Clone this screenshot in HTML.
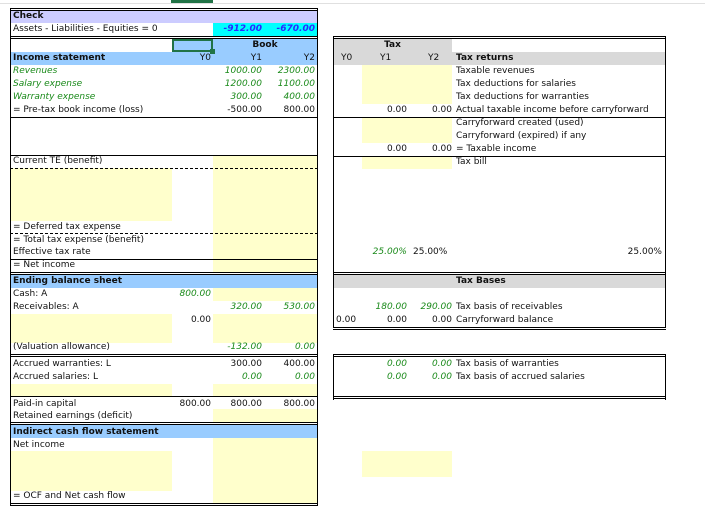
<!DOCTYPE html><html><head><meta charset="utf-8"><style>
*{margin:0;padding:0;box-sizing:border-box}
body{width:705px;height:514px;background:#fff;position:relative;overflow:hidden;font-family:"DejaVu Sans","Liberation Sans",sans-serif;font-size:9px;color:#111}
div{position:absolute}
.r{text-align:right}
.g{color:#1a8a1a;font-style:italic}
.y{background:#ffffcc}
.b{background:#99ccff}
.gr{background:#d9d9d9}
.h{height:1px;background:#000}
.d{height:0;border-top:1px dashed #000}
.dd{height:3px;border-top:1px solid #000;border-bottom:1px solid #000}
.v{width:1px;background:#000}
.t{height:13px;line-height:13px;white-space:nowrap}
.bo{font-weight:bold}
</style></head><body>
<div style="left:171px;top:0;width:42px;height:3px;background:#217346"></div>
<div style="left:0;top:3px;width:705px;height:1px;background:#e0e0e0"></div>
<!-- LEFT fills -->
<div style="left:10px;top:10px;width:307px;height:13px;background:#ccccff"></div>
<div style="left:213px;top:23px;width:104px;height:13px;background:#00ffff"></div>
<div class="b" style="left:213px;top:39px;width:104px;height:13px"></div>
<div class="b" style="left:10px;top:52px;width:307px;height:13px"></div>
<div style="left:172px;top:39px;width:41px;height:13px;background:#99ccff;border:2px solid #217346"></div>
<div style="left:210px;top:49px;width:5px;height:5px;background:#217346"></div>
<div class="y" style="left:213px;top:155px;width:104px;height:117px"></div>
<div class="y" style="left:10px;top:168px;width:162px;height:53px"></div>
<div class="b" style="left:10px;top:275px;width:307px;height:13px"></div>
<div class="y" style="left:213px;top:288px;width:104px;height:13px"></div>
<div class="y" style="left:10px;top:314px;width:162px;height:29px"></div>
<div class="y" style="left:213px;top:314px;width:104px;height:29px"></div>
<div class="y" style="left:10px;top:384px;width:162px;height:12px"></div>
<div class="y" style="left:213px;top:384px;width:104px;height:12px"></div>
<div class="y" style="left:213px;top:409px;width:104px;height:13px"></div>
<div class="b" style="left:10px;top:425px;width:307px;height:13px"></div>
<div class="y" style="left:213px;top:438px;width:104px;height:65px"></div>
<div class="y" style="left:10px;top:451px;width:162px;height:40px"></div>
<!-- LEFT lines -->
<div class="dd" style="left:10px;top:8px;width:308px;height:3px;border-bottom:1px solid #000"></div>
<div class="v" style="left:10px;top:8px;height:498px"></div>
<div class="v" style="left:317px;top:8px;height:498px"></div>
<div class="dd" style="left:10px;top:36px;width:308px"></div>
<div class="h" style="left:10px;top:117px;width:308px"></div>
<div class="h" style="left:10px;top:155px;width:308px"></div>
<div class="d" style="left:10px;top:168px;width:308px"></div>
<div class="d" style="left:10px;top:233px;width:308px"></div>
<div class="h" style="left:10px;top:259px;width:308px"></div>
<div class="dd" style="left:10px;top:272px;width:308px"></div>
<div class="dd" style="left:10px;top:354px;width:308px"></div>
<div class="h" style="left:10px;top:396px;width:308px"></div>
<div class="dd" style="left:10px;top:422px;width:308px"></div>
<div class="dd" style="left:10px;top:503px;width:308px"></div>
<!-- LEFT text -->
<div class="t bo" style="left:13px;top:10px">Check</div>
<div class="t" style="left:13px;top:23px">Assets - Liabilities - Equities = 0</div>
<div class="t r" style="left:213px;top:23px;width:49px;color:#2a2aff;font-weight:bold;font-style:italic">-912.00</div>
<div class="t r" style="left:265px;top:23px;width:50px;color:#2a2aff;font-weight:bold;font-style:italic">-670.00</div>
<div class="t bo" style="left:213px;top:39px;width:104px;text-align:center">Book</div>
<div class="t bo" style="left:13px;top:52px">Income statement</div>
<div class="t r" style="left:172px;top:52px;width:39px">Y0</div>
<div class="t r" style="left:213px;top:52px;width:49px">Y1</div>
<div class="t r" style="left:265px;top:52px;width:50px">Y2</div>
<div class="t g" style="left:13px;top:65px">Revenues</div>
<div class="t g" style="left:13px;top:78px">Salary expense</div>
<div class="t g" style="left:13px;top:91px">Warranty expense</div>
<div class="t" style="left:13px;top:104px">= Pre-tax book income (loss)</div>
<div class="t r g" style="left:213px;top:65px;width:49px">1000.00</div>
<div class="t r g" style="left:265px;top:65px;width:50px">2300.00</div>
<div class="t r g" style="left:213px;top:78px;width:49px">1200.00</div>
<div class="t r g" style="left:265px;top:78px;width:50px">1100.00</div>
<div class="t r g" style="left:213px;top:91px;width:49px">300.00</div>
<div class="t r g" style="left:265px;top:91px;width:50px">400.00</div>
<div class="t r" style="left:213px;top:104px;width:49px">-500.00</div>
<div class="t r" style="left:265px;top:104px;width:50px">800.00</div>
<div class="t" style="left:13px;top:155px">Current TE (benefit)</div>
<div class="t" style="left:13px;top:221px">= Deferred tax expense</div>
<div class="t" style="left:13px;top:234px">= Total tax expense (benefit)</div>
<div class="t" style="left:13px;top:246px">Effective tax rate</div>
<div class="t" style="left:13px;top:259px">= Net income</div>
<div class="t bo" style="left:13px;top:275px">Ending balance sheet</div>
<div class="t" style="left:13px;top:288px">Cash: A</div>
<div class="t r g" style="left:172px;top:288px;width:39px">800.00</div>
<div class="t" style="left:13px;top:301px">Receivables: A</div>
<div class="t r g" style="left:213px;top:301px;width:49px">320.00</div>
<div class="t r g" style="left:265px;top:301px;width:50px">530.00</div>
<div class="t r" style="left:172px;top:314px;width:39px">0.00</div>
<div class="t" style="left:13px;top:341px">(Valuation allowance)</div>
<div class="t r g" style="left:213px;top:341px;width:49px">-132.00</div>
<div class="t r g" style="left:265px;top:341px;width:50px">0.00</div>
<div class="t" style="left:13px;top:358px">Accrued warranties: L</div>
<div class="t r" style="left:213px;top:358px;width:49px">300.00</div>
<div class="t r" style="left:265px;top:358px;width:50px">400.00</div>
<div class="t" style="left:13px;top:371px">Accrued salaries: L</div>
<div class="t r g" style="left:213px;top:371px;width:49px">0.00</div>
<div class="t r g" style="left:265px;top:371px;width:50px">0.00</div>
<div class="t" style="left:13px;top:398px">Paid-in capital</div>
<div class="t r" style="left:172px;top:398px;width:39px">800.00</div>
<div class="t r" style="left:213px;top:398px;width:49px">800.00</div>
<div class="t r" style="left:265px;top:398px;width:50px">800.00</div>
<div class="t" style="left:13px;top:410px">Retained earnings (deficit)</div>
<div class="t bo" style="left:13px;top:426px">Indirect cash flow statement</div>
<div class="t" style="left:13px;top:439px">Net income</div>
<div class="t" style="left:13px;top:490px">= OCF and Net cash flow</div>
<!-- RIGHT -->
<div class="gr" style="left:333px;top:39px;width:119px;height:13px"></div>
<div class="gr" style="left:333px;top:52px;width:332px;height:13px"></div>
<div class="y" style="left:362px;top:65px;width:90px;height:39px"></div>
<div class="y" style="left:362px;top:117px;width:90px;height:26px"></div>
<div class="y" style="left:362px;top:156px;width:90px;height:13px"></div>
<div class="gr" style="left:333px;top:275px;width:332px;height:13px"></div>
<div class="y" style="left:362px;top:451px;width:90px;height:26px"></div>
<div class="dd" style="left:333px;top:36px;width:333px"></div>
<div class="v" style="left:333px;top:36px;height:292px"></div>
<div class="v" style="left:665px;top:36px;height:292px"></div>
<div class="h" style="left:333px;top:117px;width:333px"></div>
<div class="h" style="left:333px;top:156px;width:333px"></div>
<div class="dd" style="left:333px;top:272px;width:333px"></div>
<div class="dd" style="left:333px;top:327px;width:333px"></div>
<div class="dd" style="left:333px;top:354px;width:333px"></div>
<div class="v" style="left:333px;top:354px;height:46px"></div>
<div class="v" style="left:665px;top:354px;height:46px"></div>
<div class="dd" style="left:333px;top:396px;width:333px"></div>
<div class="t bo" style="left:333px;top:39px;width:119px;text-align:center">Tax</div>
<div class="t" style="left:341px;top:52px">Y0</div>
<div class="t" style="left:380px;top:52px">Y1</div>
<div class="t" style="left:428px;top:52px">Y2</div>
<div class="t bo" style="left:456px;top:52px">Tax returns</div>
<div class="t" style="left:456px;top:65px">Taxable revenues</div>
<div class="t" style="left:456px;top:78px">Tax deductions for salaries</div>
<div class="t" style="left:456px;top:91px">Tax deductions for warranties</div>
<div class="t r" style="left:362px;top:104px;width:45px">0.00</div>
<div class="t r" style="left:412px;top:104px;width:40px">0.00</div>
<div class="t" style="left:456px;top:104px">Actual taxable income before carryforward</div>
<div class="t" style="left:456px;top:117px">Carryforward created (used)</div>
<div class="t" style="left:456px;top:130px">Carryforward (expired) if any</div>
<div class="t r" style="left:362px;top:143px;width:45px">0.00</div>
<div class="t r" style="left:412px;top:143px;width:40px">0.00</div>
<div class="t" style="left:456px;top:143px">= Taxable income</div>
<div class="t" style="left:456px;top:156px">Tax bill</div>
<div class="t r g" style="left:362px;top:246px;width:45px">25.00%</div>
<div class="t" style="left:413px;top:246px">25.00%</div>
<div class="t r" style="left:560px;top:246px;width:102px">25.00%</div>
<div class="t bo" style="left:456px;top:275px">Tax Bases</div>
<div class="t r g" style="left:362px;top:301px;width:45px">180.00</div>
<div class="t r g" style="left:412px;top:301px;width:40px">290.00</div>
<div class="t" style="left:456px;top:301px">Tax basis of receivables</div>
<div class="t" style="left:336px;top:314px">0.00</div>
<div class="t r" style="left:362px;top:314px;width:45px">0.00</div>
<div class="t r" style="left:412px;top:314px;width:40px">0.00</div>
<div class="t" style="left:456px;top:314px">Carryforward balance</div>
<div class="t r g" style="left:362px;top:358px;width:45px">0.00</div>
<div class="t r g" style="left:412px;top:358px;width:40px">0.00</div>
<div class="t" style="left:456px;top:358px">Tax basis of warranties</div>
<div class="t r g" style="left:362px;top:371px;width:45px">0.00</div>
<div class="t r g" style="left:412px;top:371px;width:40px">0.00</div>
<div class="t" style="left:456px;top:371px">Tax basis of accrued salaries</div>
</body></html>
